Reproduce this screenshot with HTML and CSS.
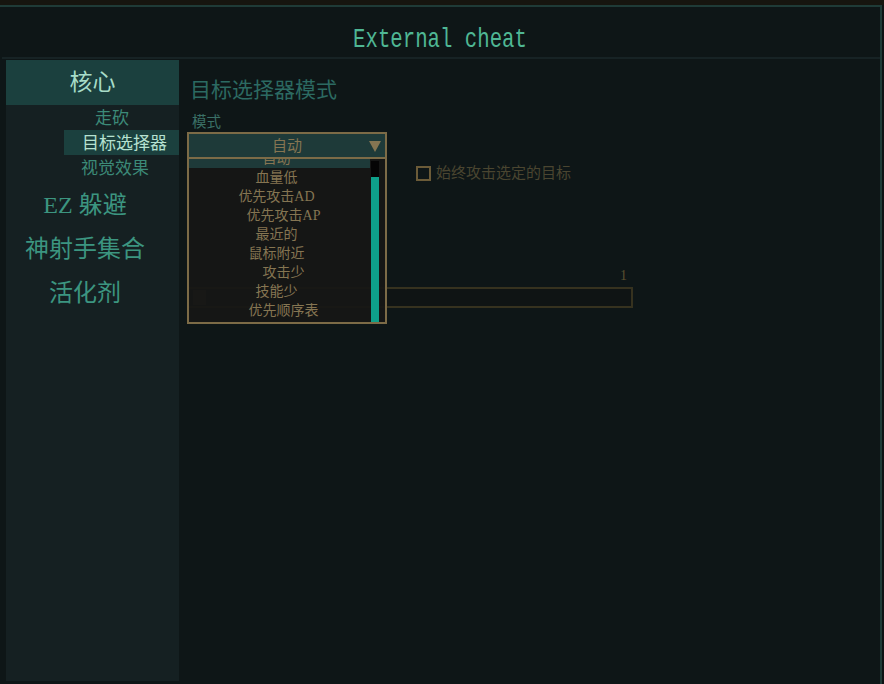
FILE: index.html
```html
<!DOCTYPE html>
<html lang="zh">
<head>
<meta charset="utf-8">
<title>External cheat</title>
<link rel="stylesheet" href="styles.css">
</head>
<body>
<div class="top-strip"></div>
<div class="window">
  <header class="titlebar"><span class="title">External cheat</span></header>
  <div class="sep"></div>
  <div class="main">
    <nav class="sidebar">
      <div class="nav-top">核心</div>
      <div class="sub sub-1">走砍</div>
      <div class="sub sub-2 active">目标选择器</div>
      <div class="sub sub-3">视觉效果</div>
      <div class="nav-item first">EZ 躲避</div>
      <div class="nav-item">神射手集合</div>
      <div class="nav-item">活化剂</div>
    </nav>
    <section class="content">
      <h1 class="heading">目标选择器模式</h1>
      <div class="label">模式</div>
      <div class="select">
        <div class="select-box">
          <span class="select-value">自动</span>
          <span class="caret"></span>
        </div>
        <div class="dropdown">
          <ul class="options">
            <li class="opt selected">自动</li>
            <li class="opt">血量低</li>
            <li class="opt">优先攻击AD</li>
            <li class="opt shift">优先攻击AP</li>
            <li class="opt">最近的</li>
            <li class="opt">鼠标附近</li>
            <li class="opt shift">攻击少</li>
            <li class="opt">技能少</li>
            <li class="opt shift">优先顺序表</li>
          </ul>
          <div class="scrollbar"><div class="thumb"></div></div>
        </div>
      </div>
      <label class="check-row"><span class="checkbox"></span><span class="check-text">始终攻击选定的目标</span></label>
      <div class="slider-block">
        <div class="slider-value">1</div>
        <div class="slider"><span class="handle"></span></div>
      </div>
    </section>
  </div>
</div>
</body>
</html>
```
FILE: styles.css
```css
* { box-sizing: border-box; }
html, body { margin: 0; padding: 0; }
body {
  width: 884px;
  height: 684px;
  overflow: hidden;
  background: #0d1314;
  font-family: "Liberation Serif", "Noto Sans CJK SC", serif;
}
.top-strip { height: 5px; background: #16150f; }
.window {
  width: 882px;
  height: 679px;
  background: #0e1617;
  border-top: 2px solid #1f3b37;
  border-right: 2px solid #1f3b37;
  display: flex;
  flex-direction: column;
}
.titlebar {
  height: 50px;
  display: flex;
  align-items: center;
  justify-content: center;
  padding-top: 15px;
}
.title {
  display: inline-block;
  font-family: "Liberation Mono", monospace;
  font-size: 20.7px;
  color: #4fb794;
  transform: scaleY(1.3);
  letter-spacing: 0;
}
.sep { height: 2px; margin-left: 2px; background: #172325; }
.main {
  flex: 1;
  display: flex;
  padding: 1px 0 3px 6px;
}
.sidebar {
  width: 173px;
  background: #152022;
  display: flex;
  flex-direction: column;
}
.nav-top {
  height: 45px;
  line-height: 45px;
  text-align: center;
  background: #1b403e;
  color: #a7dcc7;
  font-size: 23px;
}
.sub {
  height: 25px;
  line-height: 27px;
  font-size: 17px;
  color: #3c8a78;
}
.sub-1 { padding-left: 89px; }
.sub-2 { margin-left: 58px; padding-left: 18px; }
.sub-3 { padding-left: 75px; }
.sub.active { background: #1b403e; color: #b6e1d1; }
.nav-item {
  height: 44px;
  line-height: 46px;
  text-align: center;
  padding-right: 15px;
  font-size: 24px;
  color: #3c9580;
}
.nav-item.first { margin-top: 2px; }
.content {
  flex: 1;
  padding: 16px 0 0 8px;
  display: flex;
  flex-direction: column;
  align-items: flex-start;
}
.heading {
  margin: 0 0 8px 3px;
  font-weight: normal;
  font-size: 21px;
  line-height: 28px;
  color: #2c6a62;
}
.label {
  margin-left: 5px;
  font-size: 14.5px;
  line-height: 20px;
  color: #3a7066;
}
.select { position: relative; width: 200px; }
.select-box {
  height: 27px;
  border: 2px solid #7c6b47;
  background: #1e3a39;
  display: flex;
  align-items: center;
  justify-content: center;
  position: relative;
}
.select-value { font-size: 15px; color: #857552; line-height: 20px; }
.caret {
  position: absolute;
  right: 4px;
  top: 7px;
  width: 0;
  height: 0;
  border-left: 6px solid transparent;
  border-right: 6px solid transparent;
  border-top: 11px solid #857552;
}
.dropdown {
  position: absolute;
  top: 100%;
  left: 0;
  width: 200px;
  height: 165px;
  z-index: 5;
  background: rgba(22, 22, 21, 0.94);
  border: 2px solid #7c6b47;
  border-top: 0;
  display: flex;
  overflow: hidden;
}
.options {
  list-style: none;
  margin: -10px 0 0 0;
  padding: 0;
  width: 181px;
  flex: none;
}
.opt {
  height: 19px;
  line-height: 19px;
  text-align: center;
  padding-right: 6px;
  font-size: 14px;
  color: #857552;
}
.opt.shift { padding-left: 14px; }
.opt.selected { background: #1e3a39; }
.scrollbar {
  width: 8px;
  margin: 2px 0 0 1px;
  height: 161px;
  background: #050505;
  display: flex;
  flex-direction: column;
  justify-content: flex-end;
}
.thumb { height: 145px; background: #0ea08a; }
.check-row {
  margin: 6px 0 0 229px;
  display: flex;
  align-items: center;
}
.checkbox {
  width: 15px;
  height: 15px;
  border: 2px solid #6b5b38;
}
.check-text {
  margin-left: 5px;
  font-size: 15px;
  line-height: 16px;
  color: #4a4530;
}
.slider-block { margin-top: 87px; width: 446px; }
.slider-value {
  text-align: right;
  padding-right: 6px;
  font-size: 14px;
  line-height: 16px;
  color: #5a5030;
}
.slider {
  margin-top: 3px;
  height: 21px;
  border: 2px solid #36321f;
  background: #0f1414;
  position: relative;
}
.handle {
  position: absolute;
  left: 4px;
  top: 1px;
  width: 13px;
  height: 15px;
  background: #3a3528;
}
```
